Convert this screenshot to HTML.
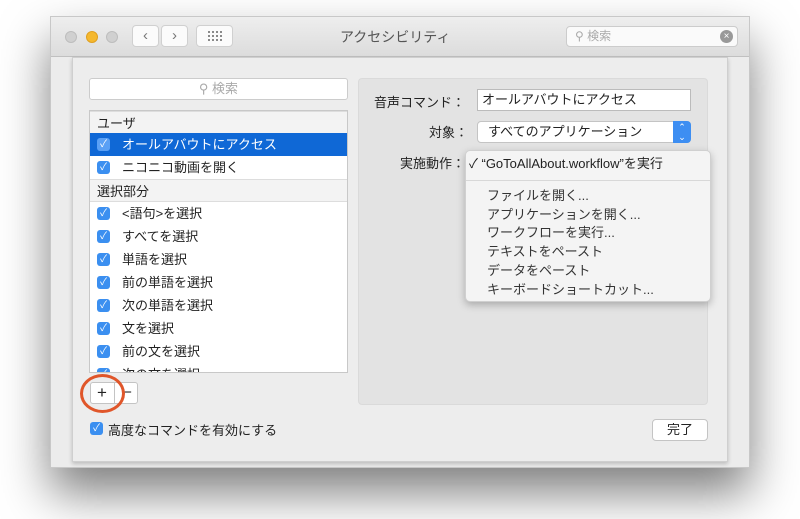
<!DOCTYPE html>
<html><head><meta charset="utf-8"><style>
*{margin:0;padding:0;box-sizing:border-box}
body{width:800px;height:519px;background:#fff;position:relative;overflow:hidden;font-family:"Liberation Sans","Noto Sans CJK JP",sans-serif;font-size:13px;color:#222}
.abs{position:absolute}
.win{left:50px;top:16px;width:700px;height:452px;background:#ececec;border:1px solid #c8c8c8;box-shadow:0 25px 45px rgba(0,0,0,.5)}
.title{left:0;top:0;width:698px;height:40px;background:linear-gradient(#eeeeee,#dcdcdc);border-bottom:1px solid #c0c0c0}
.dot{width:12px;height:12px;border-radius:50%;top:14px;background:#d0d0d0;border:1px solid #bdbdbd}
.tb{top:8px;height:22px;background:#fbfbfb;border-radius:4px;border:1px solid #d0d0d0;color:#777;text-align:center;line-height:20px;font-size:15px}
.sheet{left:72px;top:57px;width:656px;height:405px;background:#ededed;border:1px solid #cfcfcf;box-shadow:0 2px 4px rgba(0,0,0,.2)}
.row{left:90px;width:257px;height:23px;line-height:23px;font-size:13px;padding-left:32px}
.cb{position:absolute;left:7px;top:5px;width:13px;height:13px;border-radius:3px;background:#3b8ff0;color:#fff;font-size:10px;line-height:13px;text-align:center}
.hdr{background:#f3f3f3;border-top:1px solid #ddd;border-bottom:1px solid #ddd;padding-left:7px}
.mi{left:487px;font-size:13px;color:#333;height:19px;line-height:19px}
</style></head><body>
<div class="abs win"></div>
<div class="abs title" style="left:51px;top:17px"></div>
<div class="abs dot" style="left:65px;top:31px"></div>
<div class="abs dot" style="left:86px;top:31px;background:#f5b82e;border-color:#e0a020"></div>
<div class="abs dot" style="left:106px;top:31px"></div>
<div class="abs tb" style="left:132px;top:25px;width:27px">‹</div>
<div class="abs tb" style="left:161px;top:25px;width:27px">›</div>
<div class="abs tb" style="left:196px;top:25px;width:37px"><svg width="16" height="12" style="margin-top:4px" fill="#666"><g><circle cx="2" cy="2" r="1"/><circle cx="6" cy="2" r="1"/><circle cx="10" cy="2" r="1"/><circle cx="14" cy="2" r="1"/><circle cx="2" cy="6" r="1"/><circle cx="6" cy="6" r="1"/><circle cx="10" cy="6" r="1"/><circle cx="14" cy="6" r="1"/><circle cx="2" cy="10" r="1"/><circle cx="6" cy="10" r="1"/><circle cx="10" cy="10" r="1"/><circle cx="14" cy="10" r="1"/></g></svg></div>
<div class="abs" style="left:340px;top:27px;font-size:14px;color:#555">アクセシビリティ</div>
<div class="abs" style="left:566px;top:26px;width:172px;height:21px;background:#fafafa;border:1px solid #ccc;border-radius:4px;color:#aaa;font-size:12px;line-height:19px;padding-left:8px">⚲ 検索<span style="position:absolute;right:4px;top:3px;width:13px;height:13px;border-radius:50%;background:#999;color:#fff;font-size:10px;line-height:13px;text-align:center">×</span></div>
<div class="abs sheet"></div>
<div class="abs" style="left:89px;top:78px;width:259px;height:22px;background:#fff;border:1px solid #ccc;border-radius:3px;text-align:center;color:#aaa;line-height:20px">⚲ 検索</div>
<div class="abs" style="left:89px;top:110px;width:259px;height:263px;background:#fff;border:1px solid #c8c8c8;overflow:hidden"></div>
<div class="abs row hdr" style="top:111px">ユーザ</div>
<div class="abs row" style="top:133px;background:#0f68d6;color:#fff"><span class="cb" style="background:#5aa0f5">✓</span>オールアバウトにアクセス</div>
<div class="abs row" style="top:156px"><span class="cb">✓</span>ニコニコ動画を開く</div>
<div class="abs row hdr" style="top:179px">選択部分</div>
<div class="abs row" style="top:202px"><span class="cb">✓</span>&lt;語句&gt;を選択</div>
<div class="abs row" style="top:225px"><span class="cb">✓</span>すべてを選択</div>
<div class="abs row" style="top:248px"><span class="cb">✓</span>単語を選択</div>
<div class="abs row" style="top:271px"><span class="cb">✓</span>前の単語を選択</div>
<div class="abs row" style="top:294px"><span class="cb">✓</span>次の単語を選択</div>
<div class="abs row" style="top:317px"><span class="cb">✓</span>文を選択</div>
<div class="abs row" style="top:340px"><span class="cb">✓</span>前の文を選択</div>
<div class="abs row" style="top:363px;height:9px;overflow:hidden"><span class="cb">✓</span>次の文を選択</div>
<div class="abs" style="left:90px;top:382px;width:48px;height:22px;background:#fff;border:1px solid #c4c4c4;border-radius:3px"></div>
<div class="abs" style="left:90px;top:382px;width:25px;height:22px;border-right:1px solid #c4c4c4;text-align:center;line-height:22px;font-size:17px">+</div>
<div class="abs" style="left:117px;top:382px;width:21px;height:22px;text-align:center;line-height:22px;font-size:15px">−</div>
<div class="abs" style="left:80px;top:374px;width:45px;height:39px;border:3px solid #e0562a;border-radius:50%"></div>
<div class="abs" style="left:90px;top:422px;width:13px;height:13px;border-radius:3px;background:#3b8ff0;color:#fff;font-size:10px;line-height:13px;text-align:center">✓</div>
<div class="abs" style="left:108px;top:420px;font-size:13px">高度なコマンドを有効にする</div>
<div class="abs" style="left:652px;top:419px;width:56px;height:22px;background:#fff;border:1px solid #c4c4c4;border-radius:4px;text-align:center;line-height:20px">完了</div>
<div class="abs" style="left:358px;top:78px;width:350px;height:327px;background:#e3e3e3;border:1px solid #dadada;border-radius:4px"></div>
<div class="abs" style="left:374px;top:92px;font-size:13px">音声コマンド：</div>
<div class="abs" style="left:477px;top:89px;width:214px;height:22px;background:#fff;border:1px solid #bbb;padding-left:4px;line-height:20px;font-size:13px">オールアバウトにアクセス</div>
<div class="abs" style="left:429px;top:122px;font-size:13px">対象：</div>
<div class="abs" style="left:477px;top:121px;width:214px;height:22px;background:#fff;border:1px solid #c4c4c4;border-radius:4px;padding-left:10px;line-height:20px;font-size:13px">すべてのアプリケーション<span style="position:absolute;right:-1px;top:-1px;width:18px;height:22px;background:#3d8ef2;border-radius:0 4px 4px 0;color:#fff;font-size:9px;line-height:10px;text-align:center;padding-top:1px">⌃<br>⌄</span></div>
<div class="abs" style="left:400px;top:153px;font-size:13px">実施動作：</div>
<div class="abs" style="left:465px;top:150px;width:246px;height:152px;background:#f4f4f4;border:1px solid #d0d0d0;border-radius:5px;box-shadow:0 3px 8px rgba(0,0,0,.25)"></div>
<div class="abs" style="left:469px;top:153px;font-size:13px">✓ “GoToAllAbout.workflow”を実行</div>
<div class="abs" style="left:466px;top:180px;width:244px;height:1px;background:#d8d8d8"></div>
<div class="abs mi" style="top:186px">ファイルを開く...</div>
<div class="abs mi" style="top:205px">アプリケーションを開く...</div>
<div class="abs mi" style="top:223px">ワークフローを実行...</div>
<div class="abs mi" style="top:242px">テキストをペースト</div>
<div class="abs mi" style="top:261px">データをペースト</div>
<div class="abs mi" style="top:280px">キーボードショートカット...</div>
</body></html>
